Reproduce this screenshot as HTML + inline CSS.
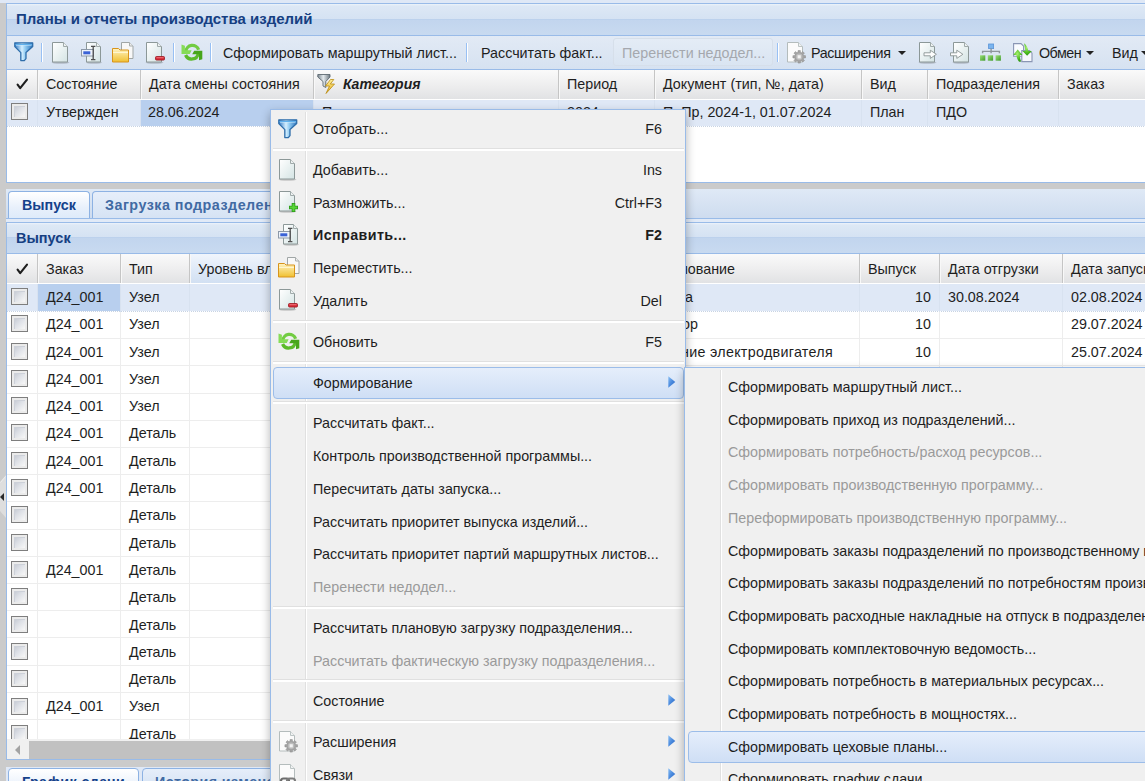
<!DOCTYPE html><html><head><meta charset="utf-8"><style>
html,body{margin:0;padding:0}
body{width:1145px;height:781px;overflow:hidden;position:relative;background:#cbcbcb;font-family:"Liberation Sans", sans-serif;font-size:14.3px;color:#1e1e1e}
.t{position:absolute;white-space:nowrap;line-height:16px}
.b{font-weight:bold}
.hdrc{color:#163f82;font-weight:bold}
.cb{position:absolute;width:15px;height:15px;border:1px solid #7e7e7e;background:linear-gradient(135deg,#b9bec9 0%,#dde0e6 45%,#f7f7f7 85%);box-shadow:inset 0 0 0 2px #ebebeb,inset 1px 1px 0 2px #cdd1d9}
.dis{color:#9a9a9a}
</style></head><body>
<div style="position:absolute;left:0px;top:0px;width:1145px;height:3px;background:#dfe8f6"></div>
<div style="position:absolute;left:6px;top:3px;width:1139px;height:180px;background:#fff;border-left:1px solid #99bbe8;border-top:1px solid #99bbe8;border-bottom:1px solid #99bbe8;box-sizing:border-box"></div>
<div style="position:absolute;left:7px;top:4px;width:1138px;height:31px;background:linear-gradient(#edf3fa 0px,#dde8f5 2px,#d5e2f3 15px,#b6cdeb 15px,#c2d5ee 16px,#c8daf0 31px)"></div>
<div style="position:absolute;left:6px;top:35px;width:1139px;height:1px;background:#99bbe8"></div>
<div class="t hdrc" style="left:16px;top:11px;font-size:15px;line-height:16px">Планы и отчеты производства изделий</div>
<div style="position:absolute;left:7px;top:36px;width:1138px;height:33px;background:linear-gradient(#e2eaf5,#d6e2f1)"></div>
<div style="position:absolute;left:6px;top:69px;width:1139px;height:1px;background:#99bbe8"></div>
<div style="position:absolute;left:14px;top:42px;line-height:0"><svg width="20" height="20" viewBox="0 0 20 20"><defs><linearGradient id="g1" x1="0" y1="0" x2="1" y2="0"><stop offset="0" stop-color="#2f78c4"/><stop offset=".4" stop-color="#d4efff"/><stop offset=".6" stop-color="#8cc8f0"/><stop offset="1" stop-color="#2e74bc"/></linearGradient></defs><path d="M0.8 0.8H18.7V4.6L12 10.6V16.6L10.3 18.6H6.8V10.6L0.8 4.6Z" fill="url(#g1)" stroke="#2f6eaa" stroke-width="1.3" stroke-linejoin="round"/><path d="M1.5 2.6H18" stroke="#5fb0ec" stroke-width="1.2"/><path d="M2 3.6H17.5" stroke="#e8f6ff" stroke-width=".6" opacity=".8"/></svg></div>
<div style="position:absolute;left:41px;top:43px;width:1px;height:19px;background:#98c0f4;box-shadow:1px 0 0 #fff"></div>
<div style="position:absolute;left:51px;top:42px;line-height:0"><svg width="20" height="22" viewBox="0 0 20 22"><defs><linearGradient id="g2" x1="0" y1="0" x2="1" y2="1"><stop offset="0" stop-color="#ffffff"/><stop offset="1" stop-color="#d4e4e4"/></linearGradient></defs><ellipse cx="9.5" cy="20.6" rx="9" ry="1.2" fill="#000" opacity=".18"/><path d="M1.5 0.5h11l4 4v15.5h-15z" fill="url(#g2)" stroke="#8c9898" stroke-width="1"/><path d="M12.5 0.5v4h4" fill="#eef2f2" stroke="#a0aaaa" stroke-width="1"/></svg></div>
<div style="position:absolute;left:81px;top:42px;line-height:0"><svg width="22" height="22" viewBox="0 0 22 22"><defs><linearGradient id="ge1" x1="0" y1="0" x2="1" y2="1"><stop offset="0" stop-color="#ffffff"/><stop offset="1" stop-color="#d4e4e4"/></linearGradient></defs><ellipse cx="13" cy="20.6" rx="8" ry="1.2" fill="#000" opacity=".18"/><path d="M5.5 0.5h10l4 4v15.5h-14z" fill="url(#ge1)" stroke="#8c9898"/><path d="M15.5 0.5v4h4" fill="#eef2f2" stroke="#a0aaaa"/><rect x="0.5" y="7.5" width="12" height="6.5" fill="#eef3fa" stroke="#8d99a8"/><rect x="2.3" y="9.3" width="7" height="3" fill="#3a62d6"/><path d="M10 4.3h4.4M12.2 4.3v13.4M10 17.7h4.4" stroke="#4e4e4e" stroke-width="1.3" fill="none"/></svg></div>
<div style="position:absolute;left:112px;top:42px;line-height:0"><svg width="22" height="21" viewBox="0 0 22 21"><defs><linearGradient id="gfo" x1="0" y1="0" x2="0" y2="1"><stop offset="0" stop-color="#fff4c4"/><stop offset="1" stop-color="#f0c030"/></linearGradient></defs><path d="M9.5 0.5h8l3.5 3.5v12.5h-11.5z" fill="#f8f8f8" stroke="#a0a6a6"/><path d="M17.5 0.5v3.5h3.5" fill="#eee" stroke="#a8aeae"/><path d="M0.5 6.5h6l1.5 1.5h8.5v12h-16z" fill="url(#gfo)" stroke="#d8941c"/><path d="M1 10.5h15" stroke="#fff6d0" stroke-width="1"/></svg></div>
<div style="position:absolute;left:145px;top:42px;line-height:0"><svg width="20" height="22" viewBox="0 0 20 22"><defs><linearGradient id="g3" x1="0" y1="0" x2="1" y2="1"><stop offset="0" stop-color="#ffffff"/><stop offset="1" stop-color="#d4e4e4"/></linearGradient></defs><ellipse cx="9.5" cy="20.6" rx="9" ry="1.2" fill="#000" opacity=".18"/><path d="M1.5 0.5h11l4 4v15.5h-15z" fill="url(#g3)" stroke="#8c9898" stroke-width="1"/><path d="M12.5 0.5v4h4" fill="#eef2f2" stroke="#a0aaaa" stroke-width="1"/><rect x="10.5" y="14.5" width="9" height="3.6" rx="1" fill="#d52a36" stroke="#9a1820" stroke-width=".8"/><rect x="11.5" y="15.2" width="7" height="1" fill="#f07078"/></svg></div>
<div style="position:absolute;left:173px;top:43px;width:1px;height:19px;background:#98c0f4;box-shadow:1px 0 0 #fff"></div>
<div style="position:absolute;left:181px;top:43px;line-height:0"><svg width="22" height="19" viewBox="0 0 22 19"><path d="M4.8 8.6A6.6 6.6 0 0 1 17.6 6.8" fill="none" stroke="#72cc42" stroke-width="3.3"/><path d="M0.5 1.6L3.9 2.8V7.2H10.6L8.8 10.9H0.5Z" fill="#86dc56"/><path d="M17.2 10.4A6.6 6.6 0 0 1 4.6 12" fill="none" stroke="#5cba2a" stroke-width="3.3"/><path d="M21.3 7.8V16.2L18 17.3V11.3H11.2L13.2 7.8Z" fill="#47a51a"/></svg></div>
<div style="position:absolute;left:210px;top:43px;width:1px;height:19px;background:#98c0f4;box-shadow:1px 0 0 #fff"></div>
<div class="t " style="left:223px;top:45px;">Сформировать маршрутный лист...</div>
<div style="position:absolute;left:466px;top:43px;width:1px;height:19px;background:#98c0f4;box-shadow:1px 0 0 #fff"></div>
<div class="t " style="left:481px;top:45px;">Рассчитать факт...</div>
<div style="position:absolute;left:613px;top:38px;width:160px;height:28px;box-sizing:border-box;border:1px solid #d6dfea;border-radius:3px;background:linear-gradient(#e4ecf6,#dae5f2)"></div>
<div class="t " style="left:622px;top:45px;color:#a5a8ae">Перенести недодел...</div>
<div style="position:absolute;left:777px;top:43px;width:1px;height:19px;background:#98c0f4;box-shadow:1px 0 0 #fff"></div>
<div style="position:absolute;left:786px;top:42px;line-height:0"><svg width="20" height="22" viewBox="0 0 20 22"><path d="M1.5 0.5h11l4 4v15.5h-15z" fill="#fbfbfb" stroke="#b4bcbc" stroke-width="1"/><path d="M12.5 0.5v4h4" fill="#f0f2f2" stroke="#bcc4c4" stroke-width="1"/><path d="M19.50 13.67 L19.50 15.93 L17.63 16.03 L17.20 17.06 L18.45 18.46 L16.86 20.05 L15.46 18.80 L14.43 19.23 L14.33 21.10 L12.07 21.10 L11.97 19.23 L10.94 18.80 L9.54 20.05 L7.95 18.46 L9.20 17.06 L8.77 16.03 L6.90 15.93 L6.90 13.67 L8.77 13.57 L9.20 12.54 L7.95 11.14 L9.54 9.55 L10.94 10.80 L11.97 10.37 L12.07 8.50 L14.33 8.50 L14.43 10.37 L15.46 10.80 L16.86 9.55 L18.45 11.14 L17.20 12.54 L17.63 13.57Z" fill="#a4a4a4" stroke="#8a8a8a" stroke-width=".5"/><circle cx="13.2" cy="14.8" r="3.2" fill="#bdbdbd"/><rect x="11.6" y="13.2" width="3.2" height="3.2" fill="#f2f2f2"/></svg></div>
<div class="t " style="left:811px;top:45px;letter-spacing:-0.35px">Расширения</div>
<div style="position:absolute;left:898px;top:51px;width:0;height:0;border-left:4px solid transparent;border-right:4px solid transparent;border-top:4px solid #222"></div>
<div style="position:absolute;left:918px;top:42px;line-height:0"><svg width="20" height="22" viewBox="0 0 20 22"><defs><linearGradient id="g4" x1="0" y1="0" x2="1" y2="1"><stop offset="0" stop-color="#ffffff"/><stop offset="1" stop-color="#d4e4e4"/></linearGradient></defs><ellipse cx="9.5" cy="20.6" rx="9" ry="1.2" fill="#000" opacity=".18"/><path d="M1.5 0.5h11l4 4v15.5h-15z" fill="url(#g4)" stroke="#8c9898" stroke-width="1"/><path d="M12.5 0.5v4h4" fill="#eef2f2" stroke="#a0aaaa" stroke-width="1"/><path d="M6 10.8H12.3V8.2L18.4 12.3L12.3 16.4V13.8H6Z" fill="#fdfdfd" stroke="#8a9494" stroke-width=".9"/></svg></div>
<div style="position:absolute;left:950px;top:42px;line-height:0"><svg width="22" height="22" viewBox="0 0 22 22"><defs><linearGradient id="gim" x1="0" y1="0" x2="1" y2="1"><stop offset="0" stop-color="#ffffff"/><stop offset="1" stop-color="#d4e4e4"/></linearGradient></defs><ellipse cx="11" cy="20.6" rx="8.5" ry="1.2" fill="#000" opacity=".18"/><path d="M3.5 0.5h11l4 4v15.5h-15z" fill="url(#gim)" stroke="#8c9898"/><path d="M14.5 0.5v4h4" fill="#eef2f2" stroke="#a0aaaa"/><path d="M0.5 10.8H6.8V8.2L12.9 12.3L6.8 16.4V13.8H0.5Z" fill="#fdfdfd" stroke="#8a9494" stroke-width=".9"/></svg></div>
<div style="position:absolute;left:980px;top:42px;line-height:0"><svg width="22" height="20" viewBox="0 0 22 20"><defs><linearGradient id="gtr" x1="0" y1="0" x2="1" y2="1"><stop offset="0" stop-color="#9ee07a"/><stop offset="1" stop-color="#3f9a2a"/></linearGradient></defs><rect x="8.6" y="2" width="5" height="4.6" fill="#7ab4ee" stroke="#5a94d8" stroke-width=".8"/><path d="M11.1 6.6v2.6M2.6 11.2v-1.8h16.8v1.8M11.1 9.4v1.8" stroke="#8e969c" stroke-width="1.4" fill="none"/><rect x="0" y="13.3" width="5.3" height="5.4" fill="url(#gtr)"/><rect x="7.8" y="13.3" width="5.3" height="5.4" fill="url(#gtr)"/><rect x="15.6" y="13.3" width="5.3" height="5.4" fill="url(#gtr)"/></svg></div>
<div style="position:absolute;left:1013px;top:43px;line-height:0"><svg width="20" height="20" viewBox="0 0 20 20"><defs><radialGradient id="gex" cx=".45" cy=".35" r=".7"><stop offset="0" stop-color="#a8f070"/><stop offset=".6" stop-color="#4cbc20"/><stop offset="1" stop-color="#2a8a10"/></radialGradient></defs><path d="M0.6 0.6H8L10.6 3.2V13.2H0.6Z" fill="#fafcff" stroke="#8a96b4" stroke-width="1.1"/><path d="M8.8 7.6H16.4L19 10.2V18.6H8.8Z" fill="#f6f8fc" stroke="#8a96b4" stroke-width="1.1"/><path d="M4.7 6.6L9.4 12H6.8C6.8 14.6 7.3 16.6 8.2 18.6L6.1 18.8C4.5 16.6 3.6 14.6 3.4 12H0.2Z" fill="url(#gex)"/><path d="M11.1 0.2C13 1.5 14.7 4.6 15.4 8H18.9L14.1 12.7L9.5 8H12.4C12.1 5 11.6 2.6 11.1 0.2Z" fill="url(#gex)"/></svg></div>
<div class="t " style="left:1039px;top:45px;letter-spacing:-0.5px">Обмен</div>
<div style="position:absolute;left:1086px;top:51px;width:0;height:0;border-left:4px solid transparent;border-right:4px solid transparent;border-top:4px solid #222"></div>
<div class="t " style="left:1112px;top:45px;">Вид</div>
<div style="position:absolute;left:1141px;top:51px;width:0;height:0;border-left:4px solid transparent;border-right:4px solid transparent;border-top:4px solid #222"></div>
<div style="position:absolute;left:7px;top:70px;width:1138px;height:30px;background:linear-gradient(#fafafa,#ececed 60%,#e1e2e4);border-bottom:1px solid #fff;box-sizing:border-box"></div>
<div style="position:absolute;left:37px;top:70px;width:1px;height:29px;background:#c5c5c5;box-shadow:1px 0 0 #f8f8f8"></div>
<div style="position:absolute;left:140px;top:70px;width:1px;height:29px;background:#c5c5c5;box-shadow:1px 0 0 #f8f8f8"></div>
<div style="position:absolute;left:313px;top:70px;width:1px;height:29px;background:#c5c5c5;box-shadow:1px 0 0 #f8f8f8"></div>
<div style="position:absolute;left:558px;top:70px;width:1px;height:29px;background:#c5c5c5;box-shadow:1px 0 0 #f8f8f8"></div>
<div style="position:absolute;left:654px;top:70px;width:1px;height:29px;background:#c5c5c5;box-shadow:1px 0 0 #f8f8f8"></div>
<div style="position:absolute;left:861px;top:70px;width:1px;height:29px;background:#c5c5c5;box-shadow:1px 0 0 #f8f8f8"></div>
<div style="position:absolute;left:927px;top:70px;width:1px;height:29px;background:#c5c5c5;box-shadow:1px 0 0 #f8f8f8"></div>
<div style="position:absolute;left:1058px;top:70px;width:1px;height:29px;background:#c5c5c5;box-shadow:1px 0 0 #f8f8f8"></div>
<svg width="24" height="24" viewBox="0 0 24 24" style="position:absolute;left:10px;top:72px"><path d="M7.6 12.6 L10.2 16.2 L17 7.6" fill="none" stroke="#1e1e1e" stroke-width="2.1" stroke-linecap="round" stroke-linejoin="round"/></svg>
<div class="t " style="left:46px;top:76px;">Состояние</div>
<div class="t " style="left:149px;top:76px;">Дата смены состояния</div>
<div class="t " style="left:567px;top:76px;">Период</div>
<div class="t " style="left:663px;top:76px;">Документ (тип, №, дата)</div>
<div class="t " style="left:870px;top:76px;">Вид</div>
<div class="t " style="left:936px;top:76px;">Подразделения</div>
<div class="t " style="left:1067px;top:76px;">Заказ</div>
<div style="position:absolute;left:317px;top:73px;line-height:0"><svg width="22" height="22" viewBox="0 0 22 22"><defs><linearGradient id="gct" x1="0" y1="0" x2="1" y2="0"><stop offset="0" stop-color="#7c8890"/><stop offset=".45" stop-color="#e4eaee"/><stop offset="1" stop-color="#6c7880"/></linearGradient><linearGradient id="glt" x1="0" y1="0" x2="0" y2="1"><stop offset="0" stop-color="#fff3a0"/><stop offset="1" stop-color="#e8a810"/></linearGradient></defs><path d="M0.8 1.5H13V4L8.8 8.5V14.5L6 13V8.5L0.8 4Z" fill="url(#gct)" stroke="#5e6a72" stroke-width=".9"/><path d="M13.5 6.5L8.5 13H12.5L9 20.5L17.5 11H13.3L16.8 6.5Z" fill="url(#glt)" stroke="#b88a10" stroke-width=".8"/></svg></div>
<div class="t" style="left:343px;top:76px;font-weight:bold;font-style:italic;font-size:14px">Категория</div>
<div style="position:absolute;left:7px;top:100px;width:1138px;height:27px;background:#dfe8f6"></div>
<div style="position:absolute;left:140px;top:100px;width:173px;height:27px;background:#b8cfee"></div>
<div style="position:absolute;left:7px;top:126px;width:1138px;height:1px;background:repeating-linear-gradient(90deg,#c8d4e4 0 1px,#fff 1px 2px)"></div>
<div style="position:absolute;left:37px;top:100px;width:1px;height:26px;background:#d8e2f0"></div>
<div style="position:absolute;left:140px;top:100px;width:1px;height:26px;background:#d8e2f0"></div>
<div style="position:absolute;left:313px;top:100px;width:1px;height:26px;background:#d8e2f0"></div>
<div style="position:absolute;left:558px;top:100px;width:1px;height:26px;background:#d8e2f0"></div>
<div style="position:absolute;left:654px;top:100px;width:1px;height:26px;background:#d8e2f0"></div>
<div style="position:absolute;left:861px;top:100px;width:1px;height:26px;background:#d8e2f0"></div>
<div style="position:absolute;left:927px;top:100px;width:1px;height:26px;background:#d8e2f0"></div>
<div style="position:absolute;left:1058px;top:100px;width:1px;height:26px;background:#d8e2f0"></div>
<div class="cb" style="left:11px;top:103px"></div>
<div class="t " style="left:46px;top:104px;">Утвержден</div>
<div class="t " style="left:148px;top:104px;">28.06.2024</div>
<div class="t " style="left:322px;top:104px;">План выпуска</div>
<div class="t " style="left:567px;top:104px;">2024</div>
<div class="t " style="left:663px;top:104px;">П. Пр, 2024-1, 01.07.2024</div>
<div class="t " style="left:870px;top:104px;">План</div>
<div class="t " style="left:936px;top:104px;">ПДО</div>
<div style="position:absolute;left:6px;top:189px;width:1139px;height:571px;background:#fff;border-left:1px solid #99bbe8;border-bottom:1px solid #99bbe8;box-sizing:border-box"></div>
<div style="position:absolute;left:6px;top:189px;width:1139px;height:33px;background:linear-gradient(#dfe9f6,#cedcef 29px,#e1eaf7 29px)"></div>
<div style="position:absolute;left:6px;top:218px;width:1139px;height:1px;background:#99bbe8"></div>
<div style="position:absolute;left:8px;top:191px;width:82px;height:27px;box-sizing:border-box;border:1px solid #8db2e3;border-bottom:none;border-radius:4px 4px 0 0;background:linear-gradient(#ffffff,#e8f0fb 60%,#deebfa)"></div>
<div class="t" style="left:22px;top:197px;font-weight:bold;color:#15428b">Выпуск</div>
<div style="position:absolute;left:92px;top:191px;width:300px;height:27px;box-sizing:border-box;border:1px solid #8db2e3;border-bottom:none;border-radius:4px 4px 0 0;background:linear-gradient(#e6eefa,#d6e3f4)"></div>
<div class="t" style="left:105px;top:197px;font-weight:bold;color:#416aa3;letter-spacing:0.5px">Загрузка подразделений</div>
<div style="position:absolute;left:6px;top:222px;width:1139px;height:1px;background:#99bbe8"></div>
<div style="position:absolute;left:7px;top:223px;width:1138px;height:30px;background:linear-gradient(#edf3fa 0px,#dde8f5 2px,#d5e2f3 14px,#b6cdeb 14px,#c2d5ee 15px,#c8daf0 30px)"></div>
<div style="position:absolute;left:6px;top:253px;width:1139px;height:1px;background:#99bbe8"></div>
<div class="t hdrc" style="left:16px;top:230px;font-size:14.5px">Выпуск</div>
<div style="position:absolute;left:7px;top:254px;width:1138px;height:30px;background:linear-gradient(#fafafa,#ececed 60%,#e1e2e4);border-bottom:1px solid #fff;box-sizing:border-box"></div>
<div style="position:absolute;left:190px;top:254px;width:480px;height:29px;background:linear-gradient(#f0f5fc,#dde8f7 60%,#d2e0f2)"></div>
<div style="position:absolute;left:37px;top:254px;width:1px;height:29px;background:#c5c5c5;box-shadow:1px 0 0 #f8f8f8"></div>
<div style="position:absolute;left:120px;top:254px;width:1px;height:29px;background:#c5c5c5;box-shadow:1px 0 0 #f8f8f8"></div>
<div style="position:absolute;left:189px;top:254px;width:1px;height:29px;background:#c5c5c5;box-shadow:1px 0 0 #f8f8f8"></div>
<div style="position:absolute;left:859px;top:254px;width:1px;height:29px;background:#c5c5c5;box-shadow:1px 0 0 #f8f8f8"></div>
<div style="position:absolute;left:939px;top:254px;width:1px;height:29px;background:#c5c5c5;box-shadow:1px 0 0 #f8f8f8"></div>
<div style="position:absolute;left:1062px;top:254px;width:1px;height:29px;background:#c5c5c5;box-shadow:1px 0 0 #f8f8f8"></div>
<svg width="24" height="24" viewBox="0 0 24 24" style="position:absolute;left:10px;top:257px"><path d="M7.6 12.6 L10.2 16.2 L17 7.6" fill="none" stroke="#1e1e1e" stroke-width="2.1" stroke-linecap="round" stroke-linejoin="round"/></svg>
<div class="t " style="left:46px;top:261px;">Заказ</div>
<div class="t " style="left:129px;top:261px;">Тип</div>
<div class="t " style="left:198px;top:261px;">Уровень вложенности</div>
<div class="t " style="left:868px;top:261px;">Выпуск</div>
<div class="t " style="left:948px;top:261px;">Дата отгрузки</div>
<div class="t " style="left:1071px;top:261px;">Дата запуска</div>
<div class="t" style="right:410px;top:261px">Наименование</div>
<div style="position:absolute;left:7px;top:284px;width:1138px;height:455px;overflow:hidden">
<div style="position:absolute;left:0;top:0px;width:1138px;height:28px;background:#dfe8f6;box-sizing:border-box;border-bottom:1px solid #dfe8f6">
<div style="position:absolute;left:31px;top:0;width:82px;height:28px;background:#b8cfee"></div>
<div style="position:absolute;left:0;top:27px;width:1138px;height:1px;background:repeating-linear-gradient(90deg,#c8d4e4 0 1px,#fff 1px 2px)"></div>
<div style="position:absolute;left:30px;top:0;width:1px;height:28px;background:#d8e2f0"></div>
<div style="position:absolute;left:113px;top:0;width:1px;height:28px;background:#d8e2f0"></div>
<div style="position:absolute;left:182px;top:0;width:1px;height:28px;background:#d8e2f0"></div>
<div style="position:absolute;left:852px;top:0;width:1px;height:28px;background:#d8e2f0"></div>
<div style="position:absolute;left:932px;top:0;width:1px;height:28px;background:#d8e2f0"></div>
<div style="position:absolute;left:1055px;top:0;width:1px;height:28px;background:#d8e2f0"></div>
<div class="cb" style="left:4px;top:4px"></div>
<div class="t" style="left:39px;top:4.96px">Д24_001</div>
<div class="t" style="left:122px;top:4.96px">Узел</div>
<div class="t" style="right:452px;top:4.96px;letter-spacing:0px">Рама</div>
<div class="t" style="left:852px;width:72px;text-align:right;top:4.96px">10</div>
<div class="t" style="left:941px;top:4.96px">30.08.2024</div>
<div class="t" style="left:1064px;top:4.96px">02.08.2024</div>
</div>
<div style="position:absolute;left:0;top:28px;width:1138px;height:27px;background:#fff;box-sizing:border-box;border-bottom:1px solid #ededed">
<div style="position:absolute;left:30px;top:0;width:1px;height:27px;background:#ededed"></div>
<div style="position:absolute;left:113px;top:0;width:1px;height:27px;background:#ededed"></div>
<div style="position:absolute;left:182px;top:0;width:1px;height:27px;background:#ededed"></div>
<div style="position:absolute;left:852px;top:0;width:1px;height:27px;background:#ededed"></div>
<div style="position:absolute;left:932px;top:0;width:1px;height:27px;background:#ededed"></div>
<div style="position:absolute;left:1055px;top:0;width:1px;height:27px;background:#ededed"></div>
<div class="cb" style="left:4px;top:3px"></div>
<div class="t" style="left:39px;top:4.26px">Д24_001</div>
<div class="t" style="left:122px;top:4.26px">Узел</div>
<div class="t" style="right:447px;top:4.26px;letter-spacing:0px">Ротор</div>
<div class="t" style="left:852px;width:72px;text-align:right;top:4.26px">10</div>
<div class="t" style="left:1064px;top:4.26px">29.07.2024</div>
</div>
<div style="position:absolute;left:0;top:55px;width:1138px;height:27px;background:#fff;box-sizing:border-box;border-bottom:1px solid #ededed">
<div style="position:absolute;left:30px;top:0;width:1px;height:27px;background:#ededed"></div>
<div style="position:absolute;left:113px;top:0;width:1px;height:27px;background:#ededed"></div>
<div style="position:absolute;left:182px;top:0;width:1px;height:27px;background:#ededed"></div>
<div style="position:absolute;left:852px;top:0;width:1px;height:27px;background:#ededed"></div>
<div style="position:absolute;left:932px;top:0;width:1px;height:27px;background:#ededed"></div>
<div style="position:absolute;left:1055px;top:0;width:1px;height:27px;background:#ededed"></div>
<div class="cb" style="left:4px;top:4px"></div>
<div class="t" style="left:39px;top:4.56px">Д24_001</div>
<div class="t" style="left:122px;top:4.56px">Узел</div>
<div class="t" style="right:312px;top:4.56px;letter-spacing:0.3px">Крепление электродвигателя</div>
<div class="t" style="left:852px;width:72px;text-align:right;top:4.56px">10</div>
<div class="t" style="left:1064px;top:4.56px">25.07.2024</div>
</div>
<div style="position:absolute;left:0;top:82px;width:1138px;height:28px;background:#fff;box-sizing:border-box;border-bottom:1px solid #ededed">
<div style="position:absolute;left:30px;top:0;width:1px;height:28px;background:#ededed"></div>
<div style="position:absolute;left:113px;top:0;width:1px;height:28px;background:#ededed"></div>
<div style="position:absolute;left:182px;top:0;width:1px;height:28px;background:#ededed"></div>
<div style="position:absolute;left:852px;top:0;width:1px;height:28px;background:#ededed"></div>
<div style="position:absolute;left:932px;top:0;width:1px;height:28px;background:#ededed"></div>
<div style="position:absolute;left:1055px;top:0;width:1px;height:28px;background:#ededed"></div>
<div class="cb" style="left:4px;top:4px"></div>
<div class="t" style="left:39px;top:4.86px">Д24_001</div>
<div class="t" style="left:122px;top:4.86px">Узел</div>
</div>
<div style="position:absolute;left:0;top:110px;width:1138px;height:27px;background:#fff;box-sizing:border-box;border-bottom:1px solid #ededed">
<div style="position:absolute;left:30px;top:0;width:1px;height:27px;background:#ededed"></div>
<div style="position:absolute;left:113px;top:0;width:1px;height:27px;background:#ededed"></div>
<div style="position:absolute;left:182px;top:0;width:1px;height:27px;background:#ededed"></div>
<div style="position:absolute;left:852px;top:0;width:1px;height:27px;background:#ededed"></div>
<div style="position:absolute;left:932px;top:0;width:1px;height:27px;background:#ededed"></div>
<div style="position:absolute;left:1055px;top:0;width:1px;height:27px;background:#ededed"></div>
<div class="cb" style="left:4px;top:3px"></div>
<div class="t" style="left:39px;top:4.16px">Д24_001</div>
<div class="t" style="left:122px;top:4.16px">Узел</div>
</div>
<div style="position:absolute;left:0;top:137px;width:1138px;height:27px;background:#fff;box-sizing:border-box;border-bottom:1px solid #ededed">
<div style="position:absolute;left:30px;top:0;width:1px;height:27px;background:#ededed"></div>
<div style="position:absolute;left:113px;top:0;width:1px;height:27px;background:#ededed"></div>
<div style="position:absolute;left:182px;top:0;width:1px;height:27px;background:#ededed"></div>
<div style="position:absolute;left:852px;top:0;width:1px;height:27px;background:#ededed"></div>
<div style="position:absolute;left:932px;top:0;width:1px;height:27px;background:#ededed"></div>
<div style="position:absolute;left:1055px;top:0;width:1px;height:27px;background:#ededed"></div>
<div class="cb" style="left:4px;top:3px"></div>
<div class="t" style="left:39px;top:4.46px">Д24_001</div>
<div class="t" style="left:122px;top:4.46px">Деталь</div>
</div>
<div style="position:absolute;left:0;top:164px;width:1138px;height:27px;background:#fff;box-sizing:border-box;border-bottom:1px solid #ededed">
<div style="position:absolute;left:30px;top:0;width:1px;height:27px;background:#ededed"></div>
<div style="position:absolute;left:113px;top:0;width:1px;height:27px;background:#ededed"></div>
<div style="position:absolute;left:182px;top:0;width:1px;height:27px;background:#ededed"></div>
<div style="position:absolute;left:852px;top:0;width:1px;height:27px;background:#ededed"></div>
<div style="position:absolute;left:932px;top:0;width:1px;height:27px;background:#ededed"></div>
<div style="position:absolute;left:1055px;top:0;width:1px;height:27px;background:#ededed"></div>
<div class="cb" style="left:4px;top:4px"></div>
<div class="t" style="left:39px;top:4.76px">Д24_001</div>
<div class="t" style="left:122px;top:4.76px">Деталь</div>
</div>
<div style="position:absolute;left:0;top:191px;width:1138px;height:27px;background:#fff;box-sizing:border-box;border-bottom:1px solid #ededed">
<div style="position:absolute;left:30px;top:0;width:1px;height:27px;background:#ededed"></div>
<div style="position:absolute;left:113px;top:0;width:1px;height:27px;background:#ededed"></div>
<div style="position:absolute;left:182px;top:0;width:1px;height:27px;background:#ededed"></div>
<div style="position:absolute;left:852px;top:0;width:1px;height:27px;background:#ededed"></div>
<div style="position:absolute;left:932px;top:0;width:1px;height:27px;background:#ededed"></div>
<div style="position:absolute;left:1055px;top:0;width:1px;height:27px;background:#ededed"></div>
<div class="cb" style="left:4px;top:4px"></div>
<div class="t" style="left:39px;top:5.06px">Д24_001</div>
<div class="t" style="left:122px;top:5.06px">Деталь</div>
</div>
<div style="position:absolute;left:0;top:218px;width:1138px;height:28px;background:#fff;box-sizing:border-box;border-bottom:1px solid #ededed">
<div style="position:absolute;left:30px;top:0;width:1px;height:28px;background:#ededed"></div>
<div style="position:absolute;left:113px;top:0;width:1px;height:28px;background:#ededed"></div>
<div style="position:absolute;left:182px;top:0;width:1px;height:28px;background:#ededed"></div>
<div style="position:absolute;left:852px;top:0;width:1px;height:28px;background:#ededed"></div>
<div style="position:absolute;left:932px;top:0;width:1px;height:28px;background:#ededed"></div>
<div style="position:absolute;left:1055px;top:0;width:1px;height:28px;background:#ededed"></div>
<div class="cb" style="left:4px;top:4px"></div>
<div class="t" style="left:39px;top:5.36px"></div>
<div class="t" style="left:122px;top:5.36px">Деталь</div>
</div>
<div style="position:absolute;left:0;top:246px;width:1138px;height:27px;background:#fff;box-sizing:border-box;border-bottom:1px solid #ededed">
<div style="position:absolute;left:30px;top:0;width:1px;height:27px;background:#ededed"></div>
<div style="position:absolute;left:113px;top:0;width:1px;height:27px;background:#ededed"></div>
<div style="position:absolute;left:182px;top:0;width:1px;height:27px;background:#ededed"></div>
<div style="position:absolute;left:852px;top:0;width:1px;height:27px;background:#ededed"></div>
<div style="position:absolute;left:932px;top:0;width:1px;height:27px;background:#ededed"></div>
<div style="position:absolute;left:1055px;top:0;width:1px;height:27px;background:#ededed"></div>
<div class="cb" style="left:4px;top:4px"></div>
<div class="t" style="left:39px;top:4.66px"></div>
<div class="t" style="left:122px;top:4.66px">Деталь</div>
</div>
<div style="position:absolute;left:0;top:273px;width:1138px;height:27px;background:#fff;box-sizing:border-box;border-bottom:1px solid #ededed">
<div style="position:absolute;left:30px;top:0;width:1px;height:27px;background:#ededed"></div>
<div style="position:absolute;left:113px;top:0;width:1px;height:27px;background:#ededed"></div>
<div style="position:absolute;left:182px;top:0;width:1px;height:27px;background:#ededed"></div>
<div style="position:absolute;left:852px;top:0;width:1px;height:27px;background:#ededed"></div>
<div style="position:absolute;left:932px;top:0;width:1px;height:27px;background:#ededed"></div>
<div style="position:absolute;left:1055px;top:0;width:1px;height:27px;background:#ededed"></div>
<div class="cb" style="left:4px;top:4px"></div>
<div class="t" style="left:39px;top:4.96px">Д24_001</div>
<div class="t" style="left:122px;top:4.96px">Деталь</div>
</div>
<div style="position:absolute;left:0;top:300px;width:1138px;height:27px;background:#fff;box-sizing:border-box;border-bottom:1px solid #ededed">
<div style="position:absolute;left:30px;top:0;width:1px;height:27px;background:#ededed"></div>
<div style="position:absolute;left:113px;top:0;width:1px;height:27px;background:#ededed"></div>
<div style="position:absolute;left:182px;top:0;width:1px;height:27px;background:#ededed"></div>
<div style="position:absolute;left:852px;top:0;width:1px;height:27px;background:#ededed"></div>
<div style="position:absolute;left:932px;top:0;width:1px;height:27px;background:#ededed"></div>
<div style="position:absolute;left:1055px;top:0;width:1px;height:27px;background:#ededed"></div>
<div class="cb" style="left:4px;top:4px"></div>
<div class="t" style="left:39px;top:5.26px"></div>
<div class="t" style="left:122px;top:5.26px">Деталь</div>
</div>
<div style="position:absolute;left:0;top:327px;width:1138px;height:27px;background:#fff;box-sizing:border-box;border-bottom:1px solid #ededed">
<div style="position:absolute;left:30px;top:0;width:1px;height:27px;background:#ededed"></div>
<div style="position:absolute;left:113px;top:0;width:1px;height:27px;background:#ededed"></div>
<div style="position:absolute;left:182px;top:0;width:1px;height:27px;background:#ededed"></div>
<div style="position:absolute;left:852px;top:0;width:1px;height:27px;background:#ededed"></div>
<div style="position:absolute;left:932px;top:0;width:1px;height:27px;background:#ededed"></div>
<div style="position:absolute;left:1055px;top:0;width:1px;height:27px;background:#ededed"></div>
<div class="cb" style="left:4px;top:5px"></div>
<div class="t" style="left:39px;top:5.56px"></div>
<div class="t" style="left:122px;top:5.56px">Деталь</div>
</div>
<div style="position:absolute;left:0;top:354px;width:1138px;height:28px;background:#fff;box-sizing:border-box;border-bottom:1px solid #ededed">
<div style="position:absolute;left:30px;top:0;width:1px;height:28px;background:#ededed"></div>
<div style="position:absolute;left:113px;top:0;width:1px;height:28px;background:#ededed"></div>
<div style="position:absolute;left:182px;top:0;width:1px;height:28px;background:#ededed"></div>
<div style="position:absolute;left:852px;top:0;width:1px;height:28px;background:#ededed"></div>
<div style="position:absolute;left:932px;top:0;width:1px;height:28px;background:#ededed"></div>
<div style="position:absolute;left:1055px;top:0;width:1px;height:28px;background:#ededed"></div>
<div class="cb" style="left:4px;top:5px"></div>
<div class="t" style="left:39px;top:5.86px"></div>
<div class="t" style="left:122px;top:5.86px">Деталь</div>
</div>
<div style="position:absolute;left:0;top:382px;width:1138px;height:27px;background:#fff;box-sizing:border-box;border-bottom:1px solid #ededed">
<div style="position:absolute;left:30px;top:0;width:1px;height:27px;background:#ededed"></div>
<div style="position:absolute;left:113px;top:0;width:1px;height:27px;background:#ededed"></div>
<div style="position:absolute;left:182px;top:0;width:1px;height:27px;background:#ededed"></div>
<div style="position:absolute;left:852px;top:0;width:1px;height:27px;background:#ededed"></div>
<div style="position:absolute;left:932px;top:0;width:1px;height:27px;background:#ededed"></div>
<div style="position:absolute;left:1055px;top:0;width:1px;height:27px;background:#ededed"></div>
<div class="cb" style="left:4px;top:4px"></div>
<div class="t" style="left:39px;top:5.16px"></div>
<div class="t" style="left:122px;top:5.16px">Деталь</div>
</div>
<div style="position:absolute;left:0;top:409px;width:1138px;height:27px;background:#fff;box-sizing:border-box;border-bottom:1px solid #ededed">
<div style="position:absolute;left:30px;top:0;width:1px;height:27px;background:#ededed"></div>
<div style="position:absolute;left:113px;top:0;width:1px;height:27px;background:#ededed"></div>
<div style="position:absolute;left:182px;top:0;width:1px;height:27px;background:#ededed"></div>
<div style="position:absolute;left:852px;top:0;width:1px;height:27px;background:#ededed"></div>
<div style="position:absolute;left:932px;top:0;width:1px;height:27px;background:#ededed"></div>
<div style="position:absolute;left:1055px;top:0;width:1px;height:27px;background:#ededed"></div>
<div class="cb" style="left:4px;top:5px"></div>
<div class="t" style="left:39px;top:5.46px">Д24_001</div>
<div class="t" style="left:122px;top:5.46px">Узел</div>
</div>
<div style="position:absolute;left:0;top:436px;width:1138px;height:27px;background:#fff;box-sizing:border-box;border-bottom:1px solid #ededed">
<div style="position:absolute;left:30px;top:0;width:1px;height:27px;background:#ededed"></div>
<div style="position:absolute;left:113px;top:0;width:1px;height:27px;background:#ededed"></div>
<div style="position:absolute;left:182px;top:0;width:1px;height:27px;background:#ededed"></div>
<div style="position:absolute;left:852px;top:0;width:1px;height:27px;background:#ededed"></div>
<div style="position:absolute;left:932px;top:0;width:1px;height:27px;background:#ededed"></div>
<div style="position:absolute;left:1055px;top:0;width:1px;height:27px;background:#ededed"></div>
<div class="cb" style="left:4px;top:5px"></div>
<div class="t" style="left:39px;top:5.76px"></div>
<div class="t" style="left:122px;top:5.76px">Деталь</div>
</div>
</div>
<div style="position:absolute;left:7px;top:739px;width:1138px;height:20px;background:#f0f0f0"></div>
<div style="position:absolute;left:29px;top:741px;width:1116px;height:18px;background:#c1c1c1"></div>
<div style="position:absolute;left:15px;top:745px;width:0;height:0;border-top:5px solid transparent;border-bottom:5px solid transparent;border-right:5px solid #a3a3a3"></div>
<div style="position:absolute;left:6px;top:759px;width:1139px;height:1px;background:#99bbe8"></div>
<svg style="position:absolute;left:0;top:475px" width="6" height="43" viewBox="0 0 6 43"><path d="M0 7L6 0V43L0 36Z" fill="#dedede"/><path d="M0.5 7.5L5.5 1.5" stroke="#ececec"/></svg>
<div style="position:absolute;left:0;top:493px;width:0;height:0;border-top:4px solid transparent;border-bottom:4px solid transparent;border-right:4px solid #2a2a2a"></div>
<div style="position:absolute;left:6px;top:767px;width:1139px;height:14px;background:#dfe8f6"></div>
<div style="position:absolute;left:8px;top:768px;width:131px;height:20px;box-sizing:border-box;border:1px solid #8db2e3;border-radius:4px 4px 0 0;background:linear-gradient(#ffffff,#e8f0fb)"></div>
<div class="t" style="left:22px;top:774px;font-weight:bold;color:#15428b;letter-spacing:0.4px">График сдачи</div>
<div style="position:absolute;left:142px;top:768px;width:200px;height:20px;box-sizing:border-box;border:1px solid #8db2e3;border-radius:4px 4px 0 0;background:linear-gradient(#e6eefa,#d6e3f4)"></div>
<div class="t" style="left:155px;top:774px;font-weight:bold;color:#416aa3;letter-spacing:0.4px">История изменений</div>
<div style="position:absolute;left:270px;top:109px;width:416px;height:700px;box-sizing:border-box;border:1px solid #99bbe8;background:#f0f0f0;box-shadow:0 4px 9px rgba(0,0,0,.3)"></div>
<div style="position:absolute;left:305px;top:112px;width:1px;height:670px;background:#e0e0e0;box-shadow:1px 0 0 #fff"></div>
<div style="position:absolute;left:278px;top:118.60px;line-height:0"><svg width="20" height="20" viewBox="0 0 20 20"><defs><linearGradient id="g1" x1="0" y1="0" x2="1" y2="0"><stop offset="0" stop-color="#2f78c4"/><stop offset=".4" stop-color="#d4efff"/><stop offset=".6" stop-color="#8cc8f0"/><stop offset="1" stop-color="#2e74bc"/></linearGradient></defs><path d="M0.8 0.8H18.7V4.6L12 10.6V16.6L10.3 18.6H6.8V10.6L0.8 4.6Z" fill="url(#g1)" stroke="#2f6eaa" stroke-width="1.3" stroke-linejoin="round"/><path d="M1.5 2.6H18" stroke="#5fb0ec" stroke-width="1.2"/><path d="M2 3.6H17.5" stroke="#e8f6ff" stroke-width=".6" opacity=".8"/></svg></div>
<div class="t " style="left:313px;top:121.00px;">Отобрать...</div>
<div class="t " style="left:500px;width:162px;text-align:right;top:121.00px">F6</div>
<div style="position:absolute;left:273px;top:147.90px;width:411px;height:1px;background:#e0e0e0;box-shadow:0 1px 0 #fff,0 2px 0 #fff"></div>
<div style="position:absolute;left:278px;top:158.50px;line-height:0"><svg width="20" height="22" viewBox="0 0 20 22"><defs><linearGradient id="g5" x1="0" y1="0" x2="1" y2="1"><stop offset="0" stop-color="#ffffff"/><stop offset="1" stop-color="#d4e4e4"/></linearGradient></defs><ellipse cx="9.5" cy="20.6" rx="9" ry="1.2" fill="#000" opacity=".18"/><path d="M1.5 0.5h11l4 4v15.5h-15z" fill="url(#g5)" stroke="#8c9898" stroke-width="1"/><path d="M12.5 0.5v4h4" fill="#eef2f2" stroke="#a0aaaa" stroke-width="1"/></svg></div>
<div class="t " style="left:313px;top:161.90px;">Добавить...</div>
<div class="t " style="left:500px;width:162px;text-align:right;top:161.90px">Ins</div>
<div style="position:absolute;left:278px;top:191.20px;line-height:0"><svg width="20" height="22" viewBox="0 0 20 22"><defs><linearGradient id="g6" x1="0" y1="0" x2="1" y2="1"><stop offset="0" stop-color="#ffffff"/><stop offset="1" stop-color="#d4e4e4"/></linearGradient></defs><ellipse cx="9.5" cy="20.6" rx="9" ry="1.2" fill="#000" opacity=".18"/><path d="M1.5 0.5h11l4 4v15.5h-15z" fill="url(#g6)" stroke="#8c9898" stroke-width="1"/><path d="M12.5 0.5v4h4" fill="#eef2f2" stroke="#a0aaaa" stroke-width="1"/><path d="M15.5 12v9M11 16.5h9" stroke="#2a9a18" stroke-width="3.6"/><path d="M15.5 12.8v7.4M11.8 16.5h7.4" stroke="#58d436" stroke-width="2"/></svg></div>
<div class="t " style="left:313px;top:194.60px;">Размножить...</div>
<div class="t " style="left:500px;width:162px;text-align:right;top:194.60px">Ctrl+F3</div>
<div style="position:absolute;left:278px;top:223.90px;line-height:0"><svg width="22" height="22" viewBox="0 0 22 22"><defs><linearGradient id="ge1" x1="0" y1="0" x2="1" y2="1"><stop offset="0" stop-color="#ffffff"/><stop offset="1" stop-color="#d4e4e4"/></linearGradient></defs><ellipse cx="13" cy="20.6" rx="8" ry="1.2" fill="#000" opacity=".18"/><path d="M5.5 0.5h10l4 4v15.5h-14z" fill="url(#ge1)" stroke="#8c9898"/><path d="M15.5 0.5v4h4" fill="#eef2f2" stroke="#a0aaaa"/><rect x="0.5" y="7.5" width="12" height="6.5" fill="#eef3fa" stroke="#8d99a8"/><rect x="2.3" y="9.3" width="7" height="3" fill="#3a62d6"/><path d="M10 4.3h4.4M12.2 4.3v13.4M10 17.7h4.4" stroke="#4e4e4e" stroke-width="1.3" fill="none"/></svg></div>
<div class="t b" style="left:313px;top:227.30px;;letter-spacing:0.4px">Исправить...</div>
<div class="t b" style="left:500px;width:162px;text-align:right;top:227.30px">F2</div>
<div style="position:absolute;left:278px;top:256.60px;line-height:0"><svg width="22" height="21" viewBox="0 0 22 21"><defs><linearGradient id="gfo" x1="0" y1="0" x2="0" y2="1"><stop offset="0" stop-color="#fff4c4"/><stop offset="1" stop-color="#f0c030"/></linearGradient></defs><path d="M9.5 0.5h8l3.5 3.5v12.5h-11.5z" fill="#f8f8f8" stroke="#a0a6a6"/><path d="M17.5 0.5v3.5h3.5" fill="#eee" stroke="#a8aeae"/><path d="M0.5 6.5h6l1.5 1.5h8.5v12h-16z" fill="url(#gfo)" stroke="#d8941c"/><path d="M1 10.5h15" stroke="#fff6d0" stroke-width="1"/></svg></div>
<div class="t " style="left:313px;top:260.00px;">Переместить...</div>
<div style="position:absolute;left:278px;top:289.30px;line-height:0"><svg width="20" height="22" viewBox="0 0 20 22"><defs><linearGradient id="g7" x1="0" y1="0" x2="1" y2="1"><stop offset="0" stop-color="#ffffff"/><stop offset="1" stop-color="#d4e4e4"/></linearGradient></defs><ellipse cx="9.5" cy="20.6" rx="9" ry="1.2" fill="#000" opacity=".18"/><path d="M1.5 0.5h11l4 4v15.5h-15z" fill="url(#g7)" stroke="#8c9898" stroke-width="1"/><path d="M12.5 0.5v4h4" fill="#eef2f2" stroke="#a0aaaa" stroke-width="1"/><rect x="10.5" y="14.5" width="9" height="3.6" rx="1" fill="#d52a36" stroke="#9a1820" stroke-width=".8"/><rect x="11.5" y="15.2" width="7" height="1" fill="#f07078"/></svg></div>
<div class="t " style="left:313px;top:292.70px;">Удалить</div>
<div class="t " style="left:500px;width:162px;text-align:right;top:292.70px">Del</div>
<div style="position:absolute;left:273px;top:319.60px;width:411px;height:1px;background:#e0e0e0;box-shadow:0 1px 0 #fff,0 2px 0 #fff"></div>
<div style="position:absolute;left:278px;top:331.70px;line-height:0"><svg width="22" height="19" viewBox="0 0 22 19"><path d="M4.8 8.6A6.6 6.6 0 0 1 17.6 6.8" fill="none" stroke="#72cc42" stroke-width="3.3"/><path d="M0.5 1.6L3.9 2.8V7.2H10.6L8.8 10.9H0.5Z" fill="#86dc56"/><path d="M17.2 10.4A6.6 6.6 0 0 1 4.6 12" fill="none" stroke="#5cba2a" stroke-width="3.3"/><path d="M21.3 7.8V16.2L18 17.3V11.3H11.2L13.2 7.8Z" fill="#47a51a"/></svg></div>
<div class="t " style="left:313px;top:333.60px;">Обновить</div>
<div class="t " style="left:500px;width:162px;text-align:right;top:333.60px">F5</div>
<div style="position:absolute;left:273px;top:360.50px;width:411px;height:1px;background:#e0e0e0;box-shadow:0 1px 0 #fff,0 2px 0 #fff"></div>
<div style="position:absolute;left:273px;top:366.50px;width:411px;height:32px;box-sizing:border-box;border:1px solid #9cbde9;border-radius:4px;background:linear-gradient(#e5eefb,#cfdff5)"></div>
<div class="t " style="left:313px;top:374.50px;">Формирование</div>
<svg style="position:absolute;left:668px;top:375.50px" width="8" height="12" viewBox="0 0 8 12"><defs><linearGradient id="ga" x1="0" y1="0" x2="1" y2="1"><stop offset="0" stop-color="#8cc0f4"/><stop offset=".5" stop-color="#4a8ade"/><stop offset="1" stop-color="#2a64c0"/></linearGradient></defs><path d="M0.3 0.2L7.3 6L0.3 11.8Z" fill="url(#ga)"/></svg>
<div style="position:absolute;left:273px;top:401.40px;width:411px;height:1px;background:#e0e0e0;box-shadow:0 1px 0 #fff,0 2px 0 #fff"></div>
<div class="t " style="left:313px;top:415.40px;">Рассчитать факт...</div>
<div class="t " style="left:313px;top:448.10px;">Контроль производственной программы...</div>
<div class="t " style="left:313px;top:480.80px;">Пересчитать даты запуска...</div>
<div class="t " style="left:313px;top:513.50px;">Рассчитать приоритет выпуска изделий...</div>
<div class="t " style="left:313px;top:546.20px;">Рассчитать приоритет партий маршрутных листов...</div>
<div class="t " style="left:313px;top:578.90px;color:#9a9a9a">Перенести недодел...</div>
<div style="position:absolute;left:273px;top:605.80px;width:411px;height:1px;background:#e0e0e0;box-shadow:0 1px 0 #fff,0 2px 0 #fff"></div>
<div class="t " style="left:313px;top:619.80px;">Рассчитать плановую загрузку подразделения...</div>
<div class="t " style="left:313px;top:652.50px;color:#9a9a9a">Рассчитать фактическую загрузку подразделения...</div>
<div style="position:absolute;left:273px;top:679.40px;width:411px;height:1px;background:#e0e0e0;box-shadow:0 1px 0 #fff,0 2px 0 #fff"></div>
<div class="t " style="left:313px;top:693.40px;">Состояние</div>
<svg style="position:absolute;left:668px;top:694.40px" width="8" height="12" viewBox="0 0 8 12"><defs><linearGradient id="ga" x1="0" y1="0" x2="1" y2="1"><stop offset="0" stop-color="#8cc0f4"/><stop offset=".5" stop-color="#4a8ade"/><stop offset="1" stop-color="#2a64c0"/></linearGradient></defs><path d="M0.3 0.2L7.3 6L0.3 11.8Z" fill="url(#ga)"/></svg>
<div style="position:absolute;left:273px;top:720.30px;width:411px;height:1px;background:#e0e0e0;box-shadow:0 1px 0 #fff,0 2px 0 #fff"></div>
<div style="position:absolute;left:278px;top:730.90px;line-height:0"><svg width="20" height="22" viewBox="0 0 20 22"><path d="M1.5 0.5h11l4 4v15.5h-15z" fill="#fbfbfb" stroke="#b4bcbc" stroke-width="1"/><path d="M12.5 0.5v4h4" fill="#f0f2f2" stroke="#bcc4c4" stroke-width="1"/><path d="M19.50 13.67 L19.50 15.93 L17.63 16.03 L17.20 17.06 L18.45 18.46 L16.86 20.05 L15.46 18.80 L14.43 19.23 L14.33 21.10 L12.07 21.10 L11.97 19.23 L10.94 18.80 L9.54 20.05 L7.95 18.46 L9.20 17.06 L8.77 16.03 L6.90 15.93 L6.90 13.67 L8.77 13.57 L9.20 12.54 L7.95 11.14 L9.54 9.55 L10.94 10.80 L11.97 10.37 L12.07 8.50 L14.33 8.50 L14.43 10.37 L15.46 10.80 L16.86 9.55 L18.45 11.14 L17.20 12.54 L17.63 13.57Z" fill="#a4a4a4" stroke="#8a8a8a" stroke-width=".5"/><circle cx="13.2" cy="14.8" r="3.2" fill="#bdbdbd"/><rect x="11.6" y="13.2" width="3.2" height="3.2" fill="#f2f2f2"/></svg></div>
<div class="t " style="left:313px;top:734.30px;">Расширения</div>
<svg style="position:absolute;left:668px;top:735.30px" width="8" height="12" viewBox="0 0 8 12"><defs><linearGradient id="ga" x1="0" y1="0" x2="1" y2="1"><stop offset="0" stop-color="#8cc0f4"/><stop offset=".5" stop-color="#4a8ade"/><stop offset="1" stop-color="#2a64c0"/></linearGradient></defs><path d="M0.3 0.2L7.3 6L0.3 11.8Z" fill="url(#ga)"/></svg>
<div style="position:absolute;left:278px;top:763.60px;line-height:0"><svg width="20" height="22" viewBox="0 0 20 22"><path d="M1.5 0.5h11l4 4v15.5h-15z" fill="#fbfbfb" stroke="#b4bcbc" stroke-width="1"/><path d="M12.5 0.5v4h4" fill="#f0f2f2" stroke="#bcc4c4" stroke-width="1"/><rect x="3" y="14.5" width="8" height="6" rx="2.5" fill="none" stroke="#6c6c6c" stroke-width="2.2"/><rect x="9" y="14.5" width="8" height="6" rx="2.5" fill="none" stroke="#7c7c7c" stroke-width="2.2"/></svg></div>
<div class="t " style="left:313px;top:767.00px;">Связи</div>
<svg style="position:absolute;left:668px;top:768.00px" width="8" height="12" viewBox="0 0 8 12"><defs><linearGradient id="ga" x1="0" y1="0" x2="1" y2="1"><stop offset="0" stop-color="#8cc0f4"/><stop offset=".5" stop-color="#4a8ade"/><stop offset="1" stop-color="#2a64c0"/></linearGradient></defs><path d="M0.3 0.2L7.3 6L0.3 11.8Z" fill="url(#ga)"/></svg>
<div style="position:absolute;left:684px;top:367px;width:600px;height:500px;box-sizing:border-box;border:1px solid #99bbe8;background:#f0f0f0;box-shadow:0 4px 9px rgba(0,0,0,.3)"></div>
<div style="position:absolute;left:720px;top:370px;width:1px;height:500px;background:#e0e0e0;box-shadow:1px 0 0 #fff"></div>
<div class="t" style="left:728px;top:379.00px;">Сформировать маршрутный лист...</div>
<div class="t" style="left:728px;top:411.70px;">Сформировать приход из подразделений...</div>
<div class="t" style="left:728px;top:444.40px;color:#9a9a9a">Сформировать потребность/расход ресурсов...</div>
<div class="t" style="left:728px;top:477.10px;color:#9a9a9a">Сформировать производственную программу...</div>
<div class="t" style="left:728px;top:509.80px;color:#9a9a9a">Переформировать производственную программу...</div>
<div class="t" style="left:728px;top:542.50px;">Сформировать заказы подразделений по производственному плану...</div>
<div class="t" style="left:728px;top:575.20px;">Сформировать заказы подразделений по потребностям производства...</div>
<div class="t" style="left:728px;top:607.90px;">Сформировать расходные накладные на отпуск в подразделения...</div>
<div class="t" style="left:728px;top:640.60px;">Сформировать комплектовочную ведомость...</div>
<div class="t" style="left:728px;top:673.30px;">Сформировать потребность в материальных ресурсах...</div>
<div class="t" style="left:728px;top:706.00px;">Сформировать потребность в мощностях...</div>
<div style="position:absolute;left:688px;top:730.70px;width:500px;height:32px;box-sizing:border-box;border:1px solid #9cbde9;border-radius:4px;background:linear-gradient(#e5eefb,#cfdff5)"></div>
<div class="t" style="left:728px;top:738.70px;">Сформировать цеховые планы...</div>
<div class="t" style="left:728px;top:771.40px;">Сформировать график сдачи...</div>
</body></html>
